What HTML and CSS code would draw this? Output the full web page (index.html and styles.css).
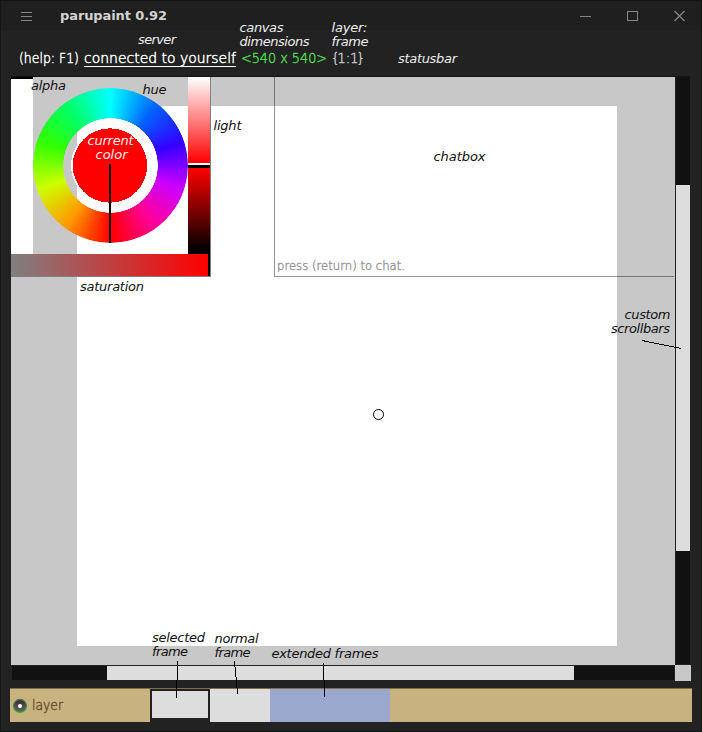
FILE: index.html
```html
<!DOCTYPE html>
<html lang="en">
<head>
<meta charset="utf-8">
<title>parupaint 0.92</title>
<link rel="stylesheet" href="styles.css">
</head>
<body>
<div class="window">
  <header class="titlebar">
    <svg class="menu" width="12" height="10" shape-rendering="crispEdges"><path d="M0 .5H11M0 4.5H11M0 8.5H11"/></svg>
    <h1>parupaint 0.92</h1>
    <svg class="control" width="12" height="12" shape-rendering="crispEdges"><path d="M0 6.5H11"/></svg>
    <svg class="control" width="12" height="12" shape-rendering="crispEdges"><path d="M.5 1.5H10.5V10.5H.5Z"/></svg>
    <svg class="control close" width="12" height="12"><path d="M.5 1L10.5 11M10.5 1L.5 11"/></svg>
  </header>
  <div class="statusbar">
    <svg width="400" height="26">
      <text class="help" x="8" y="16" textLength="60" lengthAdjust="spacingAndGlyphs">(help: F1)</text>
      <text class="server" x="73" y="16" textLength="152" lengthAdjust="spacingAndGlyphs">connected to yourself</text>
      <path class="underline" d="M73 19.500H225"/>
      <text class="size" x="230" y="16" textLength="86" lengthAdjust="spacingAndGlyphs">&lt;540 x 540&gt;</text>
      <text class="pos" x="320" y="16" textLength="34">{1 : 1}</text>
    </svg>
  </div>
  <main class="workspace">
    <div class="view">
      <div class="canvas"></div>
      <div class="picker">
        <div class="alpha"></div>
        <div class="wheel"><div class="hole"></div><svg class="disc" width="156" height="156" shape-rendering="crispEdges"><circle class="rim" cx="77" cy="77.500" r="39"/><circle class="color" cx="77" cy="77.500" r="37.200"/><path d="M77 76V155"/></svg></div>
        <div class="light"></div>
        <div class="saturation"></div>
      </div>
      <div class="chat"><svg width="140" height="18"><text x="2" y="13" textLength="128" lengthAdjust="spacingAndGlyphs">press (return) to chat.</text></svg></div>
      <div class="brush"></div>
    </div>
    <div class="vscroll"><div class="vthumb"></div></div>
    <div class="hscroll"><div class="hthumb"></div></div>
    <div class="corner"></div>
  </main>
  <footer class="layers">
    <div class="layer-name">
      <svg width="16" height="16"><defs><linearGradient id="eye" x2="0" y2="1"><stop stop-color="#2c2c2c"/><stop offset="1" stop-color="#686868"/></linearGradient><linearGradient id="ring" x2="0" y2="1"><stop stop-color="#5d6b48"/><stop offset="1" stop-color="#45b52b"/></linearGradient></defs><circle cx="8" cy="8" r="6.500" fill="url(#eye)" stroke="url(#ring)" stroke-width="1.300"/><circle cx="8" cy="8" r="2" fill="#fff"/></svg>
      <svg width="34" height="18"><text x="0" y="13" textLength="31" lengthAdjust="spacingAndGlyphs">layer</text></svg>
    </div>
    <div class="frame selected"></div>
    <div class="frame"></div>
    <div class="frame extended"></div>
  </footer>
  <svg class="notes" width="702" height="732">
    <g class="on-dark">
      <text x="138" y="44" textLength="38">server</text>
      <text x="239.500" y="32" textLength="44">canvas</text><text x="239.500" y="46" textLength="70">dimensions</text>
      <text x="331.500" y="32" textLength="36">layer:</text><text x="331.500" y="46" textLength="37">frame</text>
      <text x="398" y="63" textLength="59">statusbar</text>
      <text x="87.500" y="145" textLength="46">current</text><text x="95.500" y="159" textLength="32">color</text>
    </g>
    <text x="31" y="90" textLength="35">alpha</text><text x="142.500" y="94" textLength="24">hue</text>
    <text x="213.500" y="130" textLength="28">light</text><text x="433.500" y="161" textLength="52">chatbox</text>
    <text x="80" y="291" textLength="64">saturation</text>
    <text x="624.500" y="319" textLength="46">custom</text><text x="611" y="333" textLength="59">scrollbars</text>
    <text x="152" y="642" textLength="53">selected</text><text x="152" y="656" textLength="36">frame</text>
    <text x="214.500" y="643" textLength="44">normal</text><text x="214.500" y="657" textLength="36">frame</text>
    <text x="271.500" y="658" textLength="107">extended frames</text>
    <path shape-rendering="crispEdges" d="M642 340.500L681 348.500M177.500 661V680M176.500 680V698M234.500 661V667M235.500 667V677M236.500 677V688M237.500 688V694M323.500 663V680M324.500 680V697"/>
  </svg>
</div>
</body>
</html>
```
FILE: styles.css
```css
* { box-sizing: border-box; }
body { margin: 0; background: #222; }
svg { display: block; flex: none; overflow: visible; }
.window {
  position: relative;
  width: 702px;
  height: 732px;
  padding: 0 9px 9px 10px;
  background: #222;
  border: 1px solid #141414;
  overflow: hidden;
}
.titlebar {
  display: flex;
  align-items: center;
  height: 30px;
  margin: 0 -9px 0 -10px;
  padding: 0 15px 0 20px;
  background: #1f1f1f;
}
.titlebar path { fill: none; stroke: #858585; }
.titlebar .close path { stroke-width: 1.3; }
.titlebar .menu { margin-top: 1px; }
.titlebar h1 {
  flex: 1;
  margin: 0 0 1px 27px;
  font: bold 13px "DejaVu Sans", sans-serif;
  letter-spacing: -.1px;
  color: #d3d3d3;
}
.control { margin-left: 35px; }
.statusbar { height: 45px; padding-top: 16px; }
.statusbar text, .chat text, .layer-name text {
  font: 200 13.5px "DejaVu Sans", "DejaVu Sans Light", sans-serif;
  stroke-width: .45px;
}
.help, .server { fill: #fff; stroke: #fff; }
.size { fill: #4dd94d; stroke: #4dd94d; }
.pos { fill: #c8c8c8; stroke: #c8c8c8; }
.underline { stroke: #fff; }
.workspace {
  display: grid;
  grid-template: 588px 16px / 664px 16px;
  width: 680px;
  border-top: 1px solid #141414;
}
.view { position: relative; background: #c8c8c8; overflow: hidden; }
.canvas { width: 540px; height: 540px; margin: 29px 0 0 66px; background: #fff; }
.picker {
  position: absolute;
  left: 0;
  top: 0;
  display: grid;
  grid-template: 177px 22px / 22px 155px 22px;
  width: 200px;
  height: 200px;
  border: solid #808080;
  border-width: 0 1px 1px 0;
}
.alpha { background: #fff; border-top: 2px solid #000; }
.wheel {
  position: relative;
  width: 155px;
  height: 155px;
  margin-top: 11px;
}
.hole {
  width: 155px;
  height: 155px;
  border-radius: 50%;
  background: conic-gradient(from 180deg, #f00, #f90, #cf0, #3f0, #0f6, #0ff, #06f, #30f, #c0f, #f09, #f00);
  -webkit-mask: radial-gradient(circle, transparent 47px, #000 47.500px);
  mask: radial-gradient(circle, transparent 47px, #000 47.500px);
}
.disc { position: absolute; left: 0; top: 0; }
.rim { fill: #fff; }
.color { fill: #f00; }
.disc path { stroke: #000; stroke-width: 2; }
.light { background: linear-gradient(#fff 0, #f00 86px, #fff 86px, #fff 88px, #000 88px, #000 91px, #f00 91px, #000 174px); }
.saturation {
  grid-column: 1 / 4;
  background: linear-gradient(90deg, #808080, #f00 197px, #000 197px);
}
.chat {
  position: absolute;
  left: 263px;
  top: 0;
  width: 400px;
  height: 200px;
  display: flex;
  align-items: flex-end;
  padding-bottom: 1px;
  border: solid rgba(0, 0, 0, .42);
  border-width: 0 0 1px 1px;
}
.chat text { font-size: 12.500px; fill: #999; stroke: #999; }
.brush {
  position: absolute;
  left: 362px;
  top: 332px;
  width: 11px;
  height: 11px;
  border: 1px solid #000;
  border-radius: 50%;
}
.vscroll {
  padding-top: 108px;
  background: #111;
  border: solid #222;
  border-width: 0 1px 1px;
}
.vthumb { height: 366px; background: #ddd; }
.hscroll { border: 1px solid #222; background: #111; padding-left: 95px; }
.hthumb { width: 467px; height: 14px; background: #ddd; }
.corner { background: #c8c8c8; }
.layers {
  display: flex;
  width: 682px;
  height: 34px;
  margin: 7px 0 0 -1px;
  background: #c8b380;
  border-top: 1px solid #7f6e48;
}
.layer-name { display: flex; align-items: center; gap: 4px; width: 140px; padding-left: 2px; }
.layer-name text { fill: #6b4d30; stroke: #6b4d30; }
.frame { width: 60px; background: #ddd; }
.selected { border: solid #222; border-width: 2px 2px 4px; }
.extended { width: 120px; background: #99a8cc; }
.notes { position: absolute; left: -1px; top: -1px; }
.notes text { font: italic 13px "DejaVu Sans", sans-serif; fill: #111; }
.notes .on-dark text { fill: #eee; }
.notes path { stroke: #000; fill: none; }
```
